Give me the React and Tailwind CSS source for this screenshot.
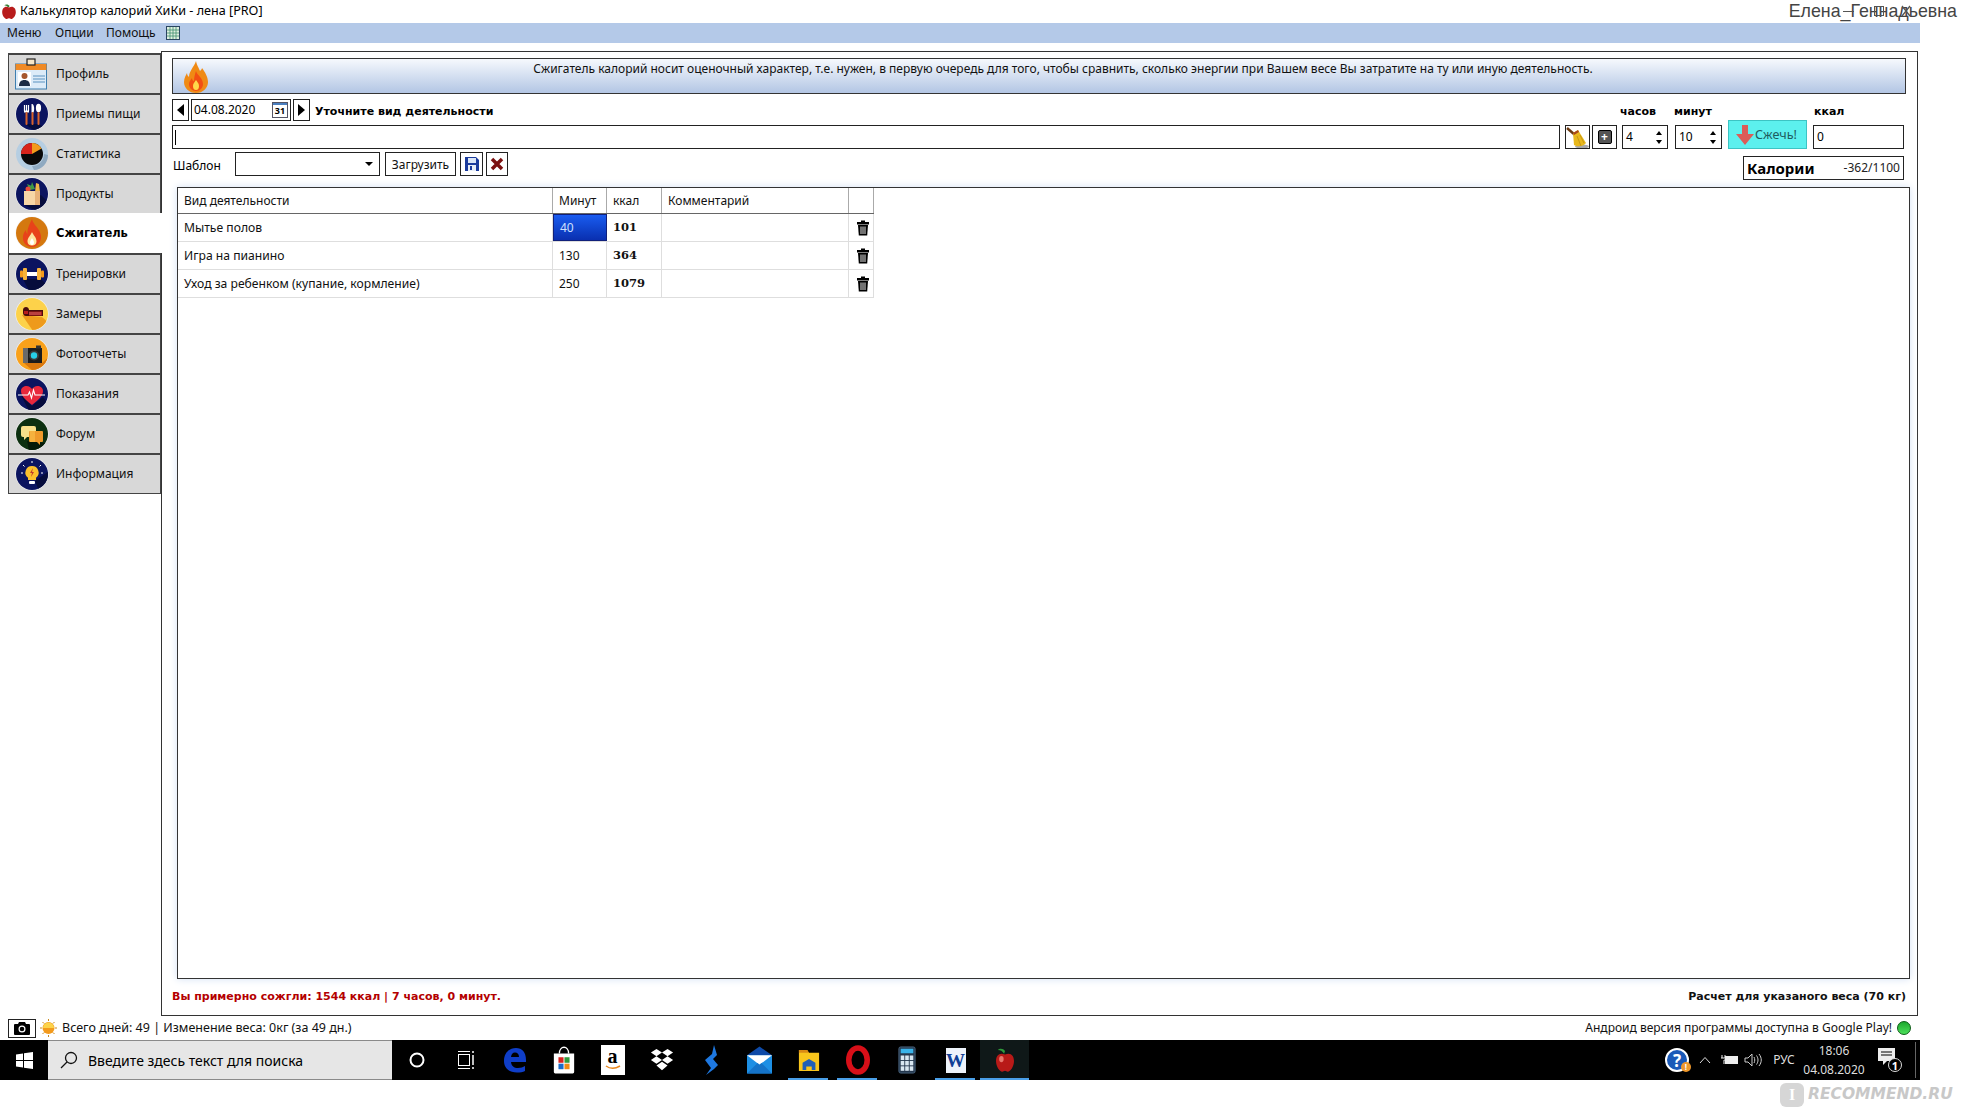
import React, { useId } from "react";

const Circle = ({ c, shade, children }) => {
  const id = useId();
  return (
    <svg width="34" height="34" viewBox="0 0 34 34" className="shrink-0">
      <clipPath id={id}><circle cx="17" cy="17" r="16" /></clipPath>
      <circle cx="17" cy="17" r="16.600" fill="#f2f2f2" />
      <circle cx="17" cy="17" r="16" fill={c} />
      {shade && <path d={shade.d} fill={shade.c} clipPath={`url(#${id})`} />}
      {children}
    </svg>
  );
};

const NAVY = "#0b1460";
const DARK = "#060c3c";

const icons = {
  profile: (
    <svg width="34" height="34" viewBox="0 0 34 34" className="shrink-0">
      <rect x="0.500" y="7" width="31" height="25" fill="#dcebf8" stroke="#3f7fb0" />
      <rect x="0.500" y="7" width="31" height="6" fill="#f08a24" />
      <rect x="12" y="2" width="8" height="6" fill="#f7e7c8" stroke="#222" strokeWidth="1.200" />
      <rect x="3" y="15" width="13" height="14" fill="#fff" />
      <circle cx="9.500" cy="19" r="3" fill="#a5562c" />
      <path d="M4 29c0-4 2-6 5.500-6s5.500 2 5.500 6z" fill="#1d2c44" />
      <path d="M18 19h12M18 22h12M18 25h12" stroke="#5b92c0" />
    </svg>
  ),
  meals: (
    <Circle c={NAVY} shade={{ c: DARK, d: "M10 27L24 27L34 34L20 34z" }}>
      <path d="M9.500 8v6M11.500 8v6M13.500 8v6" stroke="#fff" strokeWidth="1.200" />
      <path d="M9 13.500h5v2H9z" fill="#fff" />
      <rect x="10.500" y="15" width="2" height="13" rx="1" fill="#d9622a" />
      <path d="M17.500 7c2 1.500 2 6 1 8.500h-2V7z" fill="#fff" />
      <rect x="16.500" y="15" width="2" height="13" rx="1" fill="#d9622a" />
      <ellipse cx="23.500" cy="11" rx="2.600" ry="4.200" fill="#fff" />
      <rect x="22.500" y="15" width="2" height="13" rx="1" fill="#d9622a" />
    </Circle>
  ),
  stats: (
    <svg width="34" height="34" viewBox="0 0 34 34" className="shrink-0">
      <circle cx="17" cy="17" r="16" fill="#b6cee2" />
      <path d="M17 29a12 12 0 0 0 12-12l4 1c0 8-6 15-14 15z" fill="#8fa9c0" />
      <circle cx="17" cy="17" r="11" fill="#0a0a0a" />
      <path d="M17 17V6A11 11 0 0 0 6 17z" fill="#d8241c" />
      <path d="M17 17V6A11 11 0 0 1 26.500 11.500z" fill="#f39a1c" />
    </svg>
  ),
  products: (
    <Circle c={NAVY} shade={{ c: DARK, d: "M9 28L26 18L34 26L22 34z" }}>
      <path d="M12 7l5 2-2 5zM17 5l3 7-5 1z" fill="#3f9a46" />
      <circle cx="13" cy="12" r="2.500" fill="#e84a3c" />
      <path d="M21 6l3 1 1 8h-5z" fill="#eeb64a" />
      <path d="M9 14h16v14H9z" fill="#f7d6a6" />
      <path d="M20 14h5v14h-5z" fill="#e8b27a" />
    </Circle>
  ),
  burner: (
    <Circle c="#d4780f">
      <path d="M17 3c1 6 8 9 9 17 .6 6-4 11-9 11S7 27 8 20c.5-3 2-5 3-6 0 2 .5 3 1.500 4C12 12 15 8 17 3z" fill="#e8431a" />
      <path d="M17 16c1 3 4.500 5 4.500 9.500 0 2.500-2 4-4.500 4s-4.500-1.500-4.500-4c0-4 3.500-6.500 4.500-9.500z" fill="#fde6a0" />
      <path d="M17 22c.5 1.500 2 2.500 2 4.500 0 1.500-1 2.500-2 2.500s-2-1-2-2.500c0-2 1.500-3 2-4.500z" fill="#fff" />
    </Circle>
  ),
  training: (
    <Circle c={NAVY} shade={{ c: DARK, d: "M8 22L26 22L34 30L22 34L14 34z" }}>
      <rect x="5" y="13.500" width="3" height="7" rx="1" fill="#f39a1c" />
      <rect x="26" y="13.500" width="3" height="7" rx="1" fill="#f39a1c" />
      <rect x="8" y="11" width="4" height="12" rx="1" fill="#f7b23a" />
      <rect x="22" y="11" width="4" height="12" rx="1" fill="#f7b23a" />
      <rect x="12" y="15" width="10" height="4" fill="#fff" />
    </Circle>
  ),
  measures: (
    <Circle c="#fdd24a" shade={{ c: "#ee9a1c", d: "M7 18L27 20L34 26L26 34L18 34z" }}>
      <path d="M8 13c0-2 1.500-3 3-3s3 1 3 3h14v6H11c-2 0-3-1.500-3-3z" fill="#4a0c0c" />
      <path d="M9 14h4v3H9z" fill="#b81c1c" />
      <path d="M14 14.500h13v4H14z" fill="#a81818" />
      <path d="M15 15v3M17 15v3M19 15v3M21 15v3M23 15v3M25 15v3" stroke="#e8a0a0" strokeWidth="0.600" />
    </Circle>
  ),
  photo: (
    <Circle c="#f9a11a" shade={{ c: "#d9780e", d: "M9 26L27 26L34 20L34 30L24 34L18 34z" }}>
      <rect x="8" y="11" width="19" height="15" fill="#1c1c1c" />
      <rect x="8" y="11" width="5" height="15" fill="#6a6a6a" />
      <rect x="21" y="8.500" width="5" height="3" fill="#333" />
      <circle cx="19" cy="18.500" r="5" fill="#3a3a3a" />
      <circle cx="19" cy="18.500" r="3.200" fill="#27cfe8" />
    </Circle>
  ),
  readings: (
    <Circle c={NAVY} shade={{ c: DARK, d: "M6 18L17 29L28 20L34 28L24 34L14 34z" }}>
      <path d="M17 28C9 22 6 18 6 14 6 10.500 9 9 11.500 9c2.500 0 4.500 1.500 5.500 3 1-1.500 3-3 5.500-3C25 9 28 10.500 28 14c0 4-3 8-11 14z" fill="#e8283c" />
      <path d="M3 18h10l1.500-3 2 6 2-8 1.500 5h10" fill="none" stroke="#fff" strokeWidth="1.100" />
    </Circle>
  ),
  forum: (
    <Circle c="#0c3010" shade={{ c: "#051a08", d: "M12 24L30 26L34 30L22 34L14 34z" }}>
      <path d="M6 11a2 2 0 0 1 2-2h11a2 2 0 0 1 2 2v7a2 2 0 0 1-2 2h-7l-3 3v-3H8a2 2 0 0 1-2-2z" fill="#f8e08a" />
      <path d="M15 14h12a1 1 0 0 1 1 1v9a1 1 0 0 1-1 1h-2v3l-3-3h-7a1 1 0 0 1-1-1v-9a1 1 0 0 1 1-1z" fill="#ef9a2a" />
      <path d="M15 14h5v11h-5z" fill="#f6b23e" />
    </Circle>
  ),
  info: (
    <Circle c={NAVY} shade={{ c: DARK, d: "M20 24L34 14L34 28L24 34z" }}>
      <path d="M17 9a6.500 6.500 0 0 0-4 11.700V23h8v-2.300A6.500 6.500 0 0 0 17 9z" fill="#fbc02d" />
      <path d="M18 11l-3 5h2l-1 4 3-5h-2z" fill="#c0392b" />
      <rect x="14" y="24" width="6" height="3" rx="1" fill="#fff" />
      <path d="M8 8l1.500 1.500M26 8l-1.500 1.500M17 4v2M6 16h2M26 16h2" stroke="#fff" strokeWidth="1" />
    </Circle>
  ),
};

const items = [
  ["Профиль", "profile"],
  ["Приемы пищи", "meals"],
  ["Статистика", "stats"],
  ["Продукты", "products"],
  ["Сжигатель", "burner", true],
  ["Тренировки", "training"],
  ["Замеры", "measures"],
  ["Фотоотчеты", "photo"],
  ["Показания", "readings"],
  ["Форум", "forum"],
  ["Информация", "info"],
];

const Trash = () => (
  <svg width="14" height="16" viewBox="0 0 14 16">
    <rect x="5" y="0.500" width="4" height="2" fill="#000" />
    <rect x="1" y="2" width="12" height="2.500" fill="#000" />
    <path d="M2 5h10l-.8 10.500H2.800z" fill="#000" />
    <path d="M5 6.500v7.500M7 6.500v7.500M9 6.500v7.500" stroke="#fff" strokeWidth="0.900" />
  </svg>
);

const SmallFlame = () => (
  <svg width="26" height="32" viewBox="0 0 26 32">
    <path d="M13 0c1 5 3 7 4 10 1-1 2-2 2-3 3 4 6 9 6 14 0 6-5 11-12 11S1 27 1 21c0-4 2-7 3-9 0 2 1 3 2 4 0-6 5-10 7-16z" fill="#f08a14" />
    <path d="M13 10c1 4 7 7 7 13 0 4-3 7-7 7s-7-3-7-7c0-3 2-4 3-6 0 2 1 3 2 3 0-4 1-7 2-10z" fill="#f24f12" />
    <path d="M13 19c1 2 3 3 3 6s-1.500 4-3 4-3-1-3-4 2-4 3-6z" fill="#ffd84a" />
  </svg>
);

const Spin = ({ v, w }) => (
  <div className={`${w} h-[24px] border border-[#222] flex items-center justify-between pl-[3px] pr-[5px] bg-white`}>
    <span>{v}</span>
    <div className="flex flex-col gap-[5px]">
      <div className="w-0 h-0 border-x-[3px] border-x-transparent border-b-[4px] border-b-black" />
      <div className="w-0 h-0 border-x-[3px] border-x-transparent border-t-[4px] border-t-black" />
    </div>
  </div>
);

const rows = [
  ["Мытье полов", "40", "101", true],
  ["Игра на пианино", "130", "364"],
  ["Уход за ребенком (купание, кормление)", "250", "1079"],
];

const slotIcons = [
  <svg width="18" height="18" viewBox="0 0 18 18"><circle cx="9" cy="9" r="6.500" fill="none" stroke="#fff" strokeWidth="2" /></svg>,
  <svg width="18" height="20" viewBox="0 0 18 20" fill="none" stroke="#fff"><path d="M1 1.500h12M1 18.500h12" /><rect x="1.500" y="4.500" width="11" height="11" /><path d="M16 1v2M16 5v10M16 17v2" strokeWidth="1.500" /></svg>,
  <svg width="24" height="26" viewBox="0 0 24 26"><path d="M1 14C1 6 6 1 13 1c6 0 10 4 10 12v2H8c.5 4 3 6 7 6 3 0 5-1 7-2v5c-2 1-5 1.500-8 1.500C6 25.500 1 21 1 14zm7-4h8c0-3-1.500-4.500-4-4.500S8.500 7 8 10z" fill="#0f3ec8" /></svg>,
  <svg width="24" height="30" viewBox="0 0 26 30"><path d="M8 8c0-9 10-9 10 0" fill="none" stroke="#fff" strokeWidth="1.500" /><path d="M2 8h22v20a1.500 1.500 0 0 1-1.500 1.500h-19A1.500 1.500 0 0 1 2 28z" fill="#fff" /><rect x="7" y="12" width="5.500" height="6" fill="#d8231f" /><rect x="13.500" y="12" width="5.500" height="6" fill="#2f9a3c" /><rect x="7" y="19" width="5.500" height="6" fill="#1a6bc8" /><rect x="13.500" y="19" width="5.500" height="6" fill="#f08a14" /></svg>,
  <div className="w-[24px] h-[30px] bg-white flex flex-col items-center justify-center text-black leading-none"><span className="text-[20px] font-bold font-['Liberation_Serif',serif] -mt-[4px]">a</span><svg width="16" height="5" viewBox="0 0 16 5" className="-mt-[1px]"><path d="M1 1c4 3 9 3 14 0" fill="none" stroke="#e8861a" strokeWidth="1.500" /></svg></div>,
  <svg width="24" height="24" viewBox="0 0 26 26" fill="#fff"><path d="M7 1l6 4-6 4-6-4zM19 1l6 4-6 4-6-4zM7 9l6 4-6 4-6-4zM19 9l6 4-6 4-6-4zM13 15l6 4-6 5-6-5z" /></svg>,
  <svg width="14" height="30" viewBox="0 0 14 30"><path d="M10 0L8 9l-7 6 6 8-5 7 8-6 4-4-5-6 4-4z" fill="#1e78e0" /></svg>,
  <svg width="25" height="28" viewBox="0 0 26 28"><path d="M13 0L26 9H0z" fill="#0d4aa8" /><rect y="9" width="26" height="19" fill="#1d8fe4" /><path d="M0 9l13 10L26 9z" fill="#fff" /><path d="M0 28l11-11 2 2 2-2 11 11z" fill="#1573c8" /></svg>,
  <svg width="22" height="24" viewBox="0 0 24 24"><path d="M1 1h9l2 3h11v20H1z" fill="#f8c51c" /><path d="M1 1h9l2 3H1z" fill="#d98a14" /><path d="M5 15l7-4 7 4v8h-4v-4h-6v4H5z" fill="#1f5fb8" /></svg>,
  <svg width="24" height="30" viewBox="0 0 26 30"><ellipse cx="13" cy="15" rx="10" ry="13" fill="none" stroke="#d80f18" strokeWidth="6" /></svg>,
  <svg width="18" height="30" viewBox="0 0 20 30"><rect x="1" y="0.500" width="18" height="29" rx="2" fill="#25384e" stroke="#4d6a86" /><rect x="3" y="2.500" width="14" height="5" fill="#39b3ea" /><g fill="#d9e7f2"><rect x="3" y="10" width="4" height="5" /><rect x="8" y="10" width="4" height="5" /><rect x="13" y="10" width="4" height="5" /><rect x="3" y="16" width="4" height="5" /><rect x="8" y="16" width="4" height="5" /><rect x="13" y="16" width="4" height="5" /><rect x="3" y="22" width="4" height="5" /><rect x="8" y="22" width="4" height="5" /><rect x="13" y="22" width="4" height="5" /></g></svg>,
  <div className="w-[20px] h-[25px] bg-[#eef3fb] flex items-center justify-center text-[#123f96] text-[19px] font-bold font-['Liberation_Serif',serif] leading-none">W</div>,
  <svg width="18" height="26" viewBox="0 0 20 26"><path d="M9 6C7 3 5 2 2 2c2-2 6-2 8 1z" fill="#2f9a3c" /><path d="M10 7c6-3 10 1 10 7 0 6-4 12-7 12-1 0-2-1-3-1s-2 1-3 1C4 26 0 20 0 14 0 8 4 4 10 7z" fill="#b81a18" /><ellipse cx="6" cy="12" rx="2.500" ry="3.500" fill="#e8786e" /></svg>,
];

const BOLD = "font-bold font-['DejaVu_Sans',sans-serif] text-[11px]";

export default function App() {
  return (
    <div className="relative w-[1962px] h-[1119px] overflow-hidden bg-white text-black text-[12px] font-['Noto_Sans',sans-serif]">
      {/* title bar */}
      <div className="w-[1962px] h-[23px] flex items-center pl-[2px] pr-[5px]">
        <svg width="14" height="15" viewBox="0 0 20 22" className="shrink-0"><path d="M9 5C7 3 5 2 3 2c2-2 6-2 8 1z" fill="#2f7a2c" /><path d="M10 5c6-3 10 1 10 7 0 5-4 10-7 10-1 0-2-1-3-1s-2 1-3 1C4 22 0 17 0 12 0 6 4 2 10 5z" fill="#b81c1c" /></svg>
        <span className="ml-[4px] text-[12.600px]">Калькулятор калорий ХиКи - лена [PRO]</span>
        <span className="ml-auto text-[17.800px] text-[#444] font-['Liberation_Sans',sans-serif]">Елена_Геннадьевна</span>
      </div>
      {/* menu */}
      <div className="w-[1920px] h-[20px] bg-[#b4c9e8] flex items-center pl-[7px] text-[#111]">
        <span className="w-[48px]">Меню</span>
        <span className="w-[51px]">Опции</span>
        <span className="w-[60px]">Помощь</span>
        <svg width="14" height="14" viewBox="0 0 14 14"><rect x="0.500" y="0.500" width="13" height="13" fill="#dfeee0" stroke="#2a4560" /><path d="M1 4h12M1 7h12M1 10h12M4 1v12M7 1v12M10 1v12" stroke="#3f8f70" strokeWidth="0.800" /></svg>
      </div>
      {/* body */}
      <div className="w-[1920px] h-[973px] flex pt-[8px] pl-[8px] pr-[2px]">
        <nav className="w-[153px] mt-[2px] shrink-0 flex flex-col self-start border-b border-[#444]">
          {items.map(([t, k, a]) => (
            <div
              key={t}
              className={a
                ? "relative z-10 -mr-[1px] h-[40px] pl-[6px] flex items-center gap-[7px] bg-white border-l border-[#444]"
                : "h-[40px] pl-[6px] flex items-center gap-[7px] bg-[#d8d8d8] border-x border-t-2 border-[#444] text-[#111]"}
            >
              {icons[k]}
              <span className={a ? "font-bold font-['DejaVu_Sans',sans-serif] text-[11.500px] pt-[1px]" : ""}>{t}</span>
            </div>
          ))}
        </nav>
        <main className="flex-1 h-[965px] border border-[#333] pt-[6px] pl-[10px] pr-[11px] flex flex-col">
          <div className="h-[36px] shrink-0 border border-[#333] bg-gradient-to-b from-[#f6f9fd] to-[#b3c6e4] flex items-start pl-[10px]">
            <div className="mt-[2px] shrink-0"><SmallFlame /></div>
            <div className="flex-1 text-center pt-[1px] pl-[12px] text-[#111]">Сжигатель калорий носит оценочный характер, т.е. нужен, в первую очередь для того, чтобы сравнить, сколько энергии при Вашем весе Вы затратите на ту или иную деятельность.</div>
          </div>
          <div className="mt-[5px] h-[22px] shrink-0 flex items-center">
            <div className="w-[17px] h-[22px] border border-[#222] flex items-center justify-center"><div className="w-0 h-0 border-y-[6px] border-y-transparent border-r-[7px] border-r-black" /></div>
            <div className="ml-[2px] w-[100px] h-[22px] border border-[#222] flex items-center justify-between pl-[2px] pr-[2px]">
              <span>04.08.2020</span>
              <div className="w-[16px] h-[16px] border border-[#556] bg-white flex flex-col">
                <div className="h-[3px] bg-[#4a7fc0]" />
                <span className="text-[9px] font-bold leading-[12px] text-center">31</span>
              </div>
            </div>
            <div className="ml-[2px] w-[17px] h-[22px] border border-[#222] flex items-center justify-center"><div className="w-0 h-0 border-y-[6px] border-y-transparent border-l-[7px] border-l-black" /></div>
            <span className={`ml-[5px] mt-[4px] ${BOLD}`}>Уточните вид деятельности</span>
            <div className={`ml-auto flex mt-[4px] ${BOLD}`}>
              <span className="w-[54px]">часов</span>
              <span className="w-[140px]">минут</span>
              <span className="w-[92px]">ккал</span>
            </div>
          </div>
          <div className="mt-[4px] h-[24px] shrink-0 flex items-end">
            <div className="flex-1 h-[24px] border border-[#222] flex items-center pl-[2px]"><div className="w-px h-[15px] bg-black" /></div>
            <div className="ml-[5px] w-[25px] h-[24px] border border-[#222] flex items-center justify-center overflow-hidden">
              <svg width="23" height="23" viewBox="0 0 23 23"><ellipse cx="16" cy="20.500" rx="7" ry="2" fill="#aaa" /><path d="M1 2l8 7" stroke="#6b3a12" strokeWidth="2.500" /><path d="M7 7l5-3 8 13c-3 4-9 4-12 2z" fill="#e8b81c" /><path d="M7 7l5-3 1 2-5 3z" fill="#a8461a" /><path d="M11 10l4 10M14 9l4 8" stroke="#b98a10" strokeWidth="0.700" /></svg>
            </div>
            <div className="ml-[2px] w-[25px] h-[24px] border border-[#222] flex items-center justify-center">
              <div className="w-[14px] h-[14px] rounded-[2px] bg-[#555] border border-black flex items-center justify-center text-white font-bold text-[12px] leading-none">+</div>
            </div>
            <div className="ml-[5px]"><Spin v="4" w="w-[46px]" /></div>
            <div className="ml-[7px]"><Spin v="10" w="w-[47px]" /></div>
            <div className="ml-[6px] w-[79px] h-[29px] bg-[#5cf0ee] border border-[#3cc4c4] flex items-center justify-center gap-[1px] text-[#1f5c60] text-[12.600px]">
              <svg width="18" height="20" viewBox="0 0 18 20" className="-ml-[2px]"><path d="M6 0h6v9h6l-9 11L0 9h6z" fill="#dc5c58" /></svg>
              <span className="pt-[1px]">Сжечь!</span>
            </div>
            <div className="ml-[6px] mr-[2px] w-[91px] h-[24px] border border-[#222] flex items-center pl-[3px]">0</div>
          </div>
          <div className="mt-[3px] h-[24px] shrink-0 flex items-start">
            <span className="ml-[1px] w-[62px] leading-[27px]">Шаблон</span>
            <div className="w-[145px] h-[24px] border border-[#222] flex items-center justify-end pr-[6px]"><div className="w-0 h-0 border-x-[4px] border-x-transparent border-t-[4px] border-t-black" /></div>
            <div className="ml-[5px] w-[71px] h-[24px] pt-[1px] border border-[#222] flex items-center justify-center text-[#111]">Загрузить</div>
            <div className="ml-[4px] w-[23px] h-[24px] border border-[#222] flex items-center justify-center">
              <svg width="14" height="14" viewBox="0 0 14 14"><path d="M0 0h11l3 3v11H0z" fill="#1a3a9c" /><rect x="3" y="1" width="8" height="5" fill="#dbe6f7" /><rect x="3" y="8" width="8" height="6" fill="#e8eef8" /><rect x="5" y="9" width="2" height="4" fill="#1a3a9c" /></svg>
            </div>
            <div className="ml-[3px] w-[22px] h-[24px] border border-[#222] flex items-center justify-center">
              <svg width="14" height="14" viewBox="0 0 14 14"><path d="M2 2l10 10M12 2L2 12" stroke="#7c1010" strokeWidth="3.500" /></svg>
            </div>
            <div className="ml-auto mt-[4px] mr-[2px] w-[161px] h-[24px] border border-[#222] flex items-center justify-between pl-[3px] pr-[3px]">
              <span className="text-[15px] font-bold">Калории</span>
              <span className="text-[#222]">-362/1100</span>
            </div>
          </div>
          <div className="mt-[11px] ml-[5px] -mr-[4px] h-[792px] shrink-0 border border-[#333] bg-white shadow-[0_0_8px_#d3e0f3]">
            <div className="w-[696px] grid grid-cols-[375px_54px_55px_187px_25px] h-[26px] border-b border-[#666]">
              {["Вид деятельности", "Минут", "ккал", "Комментарий", ""].map((h, i) => (
                <div key={i} className="pl-[6px] flex items-center border-r border-[#aaa] text-[#111]">{h}</div>
              ))}
            </div>
            {rows.map(([a, b, c, sel]) => (
              <div key={a} className="w-[696px] grid grid-cols-[375px_54px_55px_187px_25px] h-[28px] border-b border-[#dedede] text-[#111]">
                <div className="pl-[6px] pt-[1px] flex items-center border-r border-[#dedede] text-[12.150px]">{a}</div>
                <div className={sel
                  ? "pl-[6px] flex items-center border border-[#10207a] bg-gradient-to-b from-[#1a5cf0] to-[#0a2fb0] text-[#cfe0ff]"
                  : "pl-[6px] flex items-center border-r border-[#dedede]"}>{b}</div>
                <div className="pl-[6px] flex items-center border-r border-[#dedede] font-bold font-['DejaVu_Serif',serif] text-[11.500px]">{c}</div>
                <div className="border-r border-[#dedede]" />
                <div className="pl-[3px] flex items-center justify-center border-r border-[#dedede]"><Trash /></div>
              </div>
            ))}
          </div>
          <div className={`flex-1 flex items-center justify-between pt-[1px] ${BOLD}`}>
            <span className="text-[#b40000]">Вы примерно сожгли: 1544 ккал | 7 часов, 0 минут.</span>
            <span className="text-[#111]">Расчет для указаного веса (70 кг)</span>
          </div>
        </main>
      </div>
      {/* status */}
      <div className="w-[1920px] h-[24px] flex items-center pl-[8px] pr-[9px]">
        <div className="w-[28px] h-[19px] border border-[#222] flex items-center justify-center">
          <svg width="16" height="14" viewBox="0 0 16 14"><path d="M5 1h6l1 2h3a1 1 0 0 1 1 1v9a1 1 0 0 1-1 1H1a1 1 0 0 1-1-1V4a1 1 0 0 1 1-1h3z" fill="#000" /><circle cx="8" cy="8" r="3.500" fill="#fff" /><circle cx="8" cy="8" r="2.300" fill="#000" /></svg>
        </div>
        <svg width="17" height="18" viewBox="0 0 17 18" className="ml-[4px]"><circle cx="8.500" cy="9" r="6" fill="#f39a1c" /><path d="M3 9a5.500 5.500 0 0 1 11 0z" fill="#fcd34a" /><path d="M8.500 0v2M8.500 16v2M0 9h2M15 9h2M2.500 3l1.500 1.500M14.500 3L13 4.500M2.500 15L4 13.500M14.500 15L13 13.500" stroke="#c88a1c" /></svg>
        <span className="ml-[5px] text-[#111] text-[12.500px]">Всего дней: 49 | Изменение веса: 0кг (за 49 дн.)</span>
        <span className="ml-auto text-[#111]">Андроид версия программы доступна в Google Play!</span>
        <div className="ml-[5px] w-[14px] h-[14px] rounded-full border border-[#0a5c14] bg-gradient-to-b from-[#1aa82e] to-[#4be05a]" />
      </div>
      {/* taskbar */}
      <div className="w-[1920px] h-[40px] bg-black flex items-center text-white">
        <div className="w-[48px] h-[40px] flex items-center justify-center">
          <svg width="17" height="17" viewBox="0 0 17 17" fill="#fff"><path d="M0 2.500L7 1.500V8H0zM8 1.300L17 0v8H8zM0 9h7v6.500L0 14.500zM8 9h9v8l-9-1.300z" /></svg>
        </div>
        <div className="w-[344px] h-[40px] bg-[#e6e6e6] border-t border-b border-[#8a8a8a] flex items-center text-black text-[14px]">
          <svg width="18" height="18" viewBox="0 0 18 18" fill="none" stroke="#111" strokeWidth="1.300" className="ml-[12px]"><circle cx="11" cy="7" r="5.500" /><path d="M7 11l-6 6" /></svg>
          <span className="ml-[10px]">Введите здесь текст для поиска</span>
        </div>
        {slotIcons.map((ic, i) => (
          <div key={i} className={i === 12
            ? "relative w-[49px] h-[40px] flex items-center justify-center bg-[#0f1818]"
            : "relative w-[49px] h-[40px] flex items-center justify-center"}>
            {ic}
            {[8, 9, 11].includes(i) && <div className="absolute bottom-0 left-[4px] w-[40px] h-[2px] bg-[#4a9fe8]" />}
            {i === 12 && <div className="absolute bottom-0 left-0 w-[49px] h-[2px] bg-[#4a9fe8]" />}
          </div>
        ))}
        <div className="ml-auto flex items-center h-[40px]">
          <div className="w-[28px] flex justify-center">
            <div className="relative w-[24px] h-[24px] rounded-full border-2 border-white bg-[#1a5ab8] flex items-center justify-center text-white text-[17px] font-bold leading-none">
              ?
              <div className="absolute -right-[4px] -bottom-[2px] w-[10px] h-[10px] rounded-full bg-[#f0982a] text-white text-[8px] flex items-center justify-center">!</div>
            </div>
          </div>
          <div className="w-[28px] flex justify-center">
            <svg width="12" height="8" viewBox="0 0 12 8" fill="none" stroke="#ddd"><path d="M1 7l5-5.500L11 7" /></svg>
          </div>
          <div className="w-[22px] flex justify-center">
            <svg width="18" height="12" viewBox="0 0 18 12"><rect x="4" y="2" width="13" height="8" fill="#eee" /><path d="M1 1v3M4 1v3M0 4h5v2H3v4" stroke="#eee" fill="none" /></svg>
          </div>
          <div className="w-[24px] flex justify-center">
            <svg width="18" height="14" viewBox="0 0 18 14" fill="none" stroke="#ccc"><path d="M1 5h3l4-4v12l-4-4H1zM10 4c1 2 1 4 0 6M12.500 2.500c2 3 2 6 0 9M15 1c3 4 3 8 0 12" /></svg>
          </div>
          <span className="w-[38px] text-center text-[#ddd]">РУС</span>
          <div className="w-[62px] flex flex-col items-center leading-[19px] text-[#ddd]">
            <span>18:06</span>
            <span>04.08.2020</span>
          </div>
          <div className="w-[50px] flex justify-center">
            <div className="relative w-[24px] h-[24px]">
              <svg width="18" height="20" viewBox="0 0 18 20" fill="#eee"><path d="M0 0h17v13H9l-4 4v-4H0z" /><path d="M3 4h11M3 7h11" stroke="#000" /></svg>
              <div className="absolute right-0 bottom-0 w-[14px] h-[14px] rounded-full bg-black border border-[#ddd] text-white text-[11px] font-bold flex items-center justify-center leading-none">1</div>
            </div>
          </div>
          <div className="mr-[4px] w-px h-[36px] bg-[#666]" />
        </div>
      </div>
      {/* window controls drawn over the nickname */}
      <svg width="70" height="14" viewBox="0 0 70 14" fill="none" stroke="#555" className="absolute top-[4px] left-[1843px]">
        <path d="M0 7.500h11" />
        <rect x="31.500" y="2.500" width="9" height="9" />
        <path d="M59 2l8 10M67 2l-8 10" strokeWidth="1.300" />
      </svg>
      {/* watermark */}
      <div className="absolute left-[1780px] top-[1083px] flex items-center">
        <div className="w-[24px] h-[24px] rounded-[6px] bg-[#d6d6d6] flex items-center justify-center text-white font-bold text-[16px] font-['Liberation_Serif',serif]">I</div>
        <span className="ml-[4px] text-[#c8c8c8] text-[15.500px] font-bold italic font-['DejaVu_Sans',sans-serif] [text-shadow:0_0_2px_#fff]">RECOMMEND.RU</span>
      </div>
    </div>
  );
}
